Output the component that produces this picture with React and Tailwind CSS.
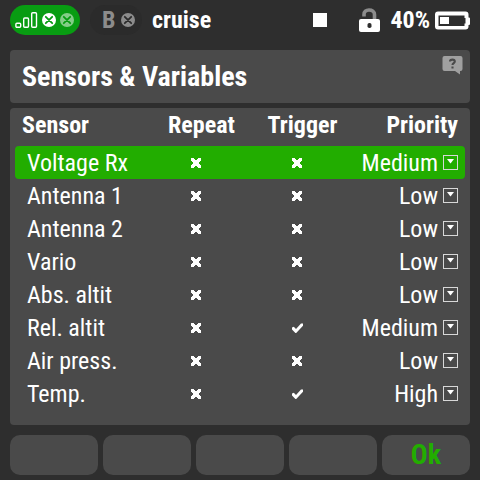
import React, { useState } from 'react';

const SENSORS = [
    { name: 'Voltage Rx', repeat: false, trigger: false, priority: 'Medium' },
    { name: 'Antenna 1', repeat: false, trigger: false, priority: 'Low' },
    { name: 'Antenna 2', repeat: false, trigger: false, priority: 'Low' },
    { name: 'Vario', repeat: false, trigger: false, priority: 'Low' },
    { name: 'Abs. altit', repeat: false, trigger: false, priority: 'Low' },
    { name: 'Rel. altit', repeat: false, trigger: true, priority: 'Medium' },
    { name: 'Air press.', repeat: false, trigger: false, priority: 'Low' },
    { name: 'Temp.', repeat: false, trigger: true, priority: 'High' },
];

const PRIORITIES = ['Low', 'Medium', 'High'];

const SignalIcon = () => (
    <svg width="23" height="16" viewBox="0 0 23 16" fill="none" stroke="#fff" strokeWidth="1.4">
        <rect x="0.9" y="11.3" width="4.8" height="4" rx="1" />
        <rect x="8.7" y="6" width="4.8" height="9.3" rx="1" />
        <rect x="16.7" y="0.7" width="4.8" height="14.6" rx="1" />
    </svg>
);

const CircleX = ({ fill, stroke }) => (
    <svg width="14" height="14" viewBox="0 0 14 14">
        <circle cx="7" cy="7" r="7" fill={fill} />
        <path d="M3.8 3.8l6.4 6.4M10.2 3.8l-6.4 6.4" stroke={stroke} strokeWidth="1.8" strokeLinecap="round" />
    </svg>
);

const UnlockIcon = () => (
    <svg width="21" height="24" viewBox="0 0 21 24">
        <path d="M5 8.5V6.5C5 3.5 7 2 10 2s5.5 1.5 5.5 4.5V12" fill="none" stroke="#8c8c8c" strokeWidth="3.6" />
        <rect y="11" width="21" height="13" rx="2" fill="#fff" />
        <rect x="8.5" y="15" width="4" height="5" rx="1.8" fill="#2e2e2e" />
    </svg>
);

const BatteryIcon = () => (
    <svg width="35" height="19" viewBox="0 0 35 19" fill="#fff">
        <path
            fillRule="evenodd"
            d="M3 0.5h27.5a3 3 0 0 1 3 3V6.5H34a1 1 0 0 1 1 1V13a1 1 0 0 1-1 1h-.5v1.5a3 3 0 0 1-3 3H3a3 3 0 0 1-3-3v-12a3 3 0 0 1 3-3zM3.5 4.5v10.5h26v-2.5h1V7h-1V4.5z"
        />
        <rect x="5" y="6" width="9" height="7" />
    </svg>
);

const HelpIcon = () => (
    <svg width="21" height="19" viewBox="0 0 21 19">
        <path d="M2.5 0h16a2 2 0 0 1 2 2v11a2 2 0 0 1-2 2H18v3.5L13 15H2.5a2 2 0 0 1-2-2V2a2 2 0 0 1 2-2z" fill="#a0a0a0" />
        <path d="M8 5.4C8 4 9 3.6 10.4 3.6s2.4.7 2.4 1.9c0 1.6-2.3 1.6-2.3 3.5M10.5 10.4v2.1" fill="none" stroke="#4a4a4a" strokeWidth="2.1" />
    </svg>
);

// both marks sit one pixel below the top of an 11px box
const CrossMark = ({ className }) => (
    <svg className={className} width="11" height="11" viewBox="0 -1 11 11" shapeRendering="crispEdges">
        <path d="M0 0h3v1h1v1h2V1h1V0h3v3H9v1H8v2h1v1h1v3H7V9H6V8H4v1H3v1H0V7h1V6h1V4H1V3H0z" fill="#fff" />
    </svg>
);

const CheckMark = ({ className }) => (
    <svg className={className} width="11" height="11" viewBox="0 -1 11 11">
        <path d="M0 4.5l1.8-.7L4 6l5-5.6h2V2.8L4.2 10H3.4L0 6.6z" fill="#fff" />
    </svg>
);

const DropIcon = () => (
    <svg width="15" height="15" viewBox="0 0 15 15" className="shrink-0">
        <rect x="0.5" y="0.5" width="14" height="14" fill="none" stroke="#d8d8d8" />
        <path d="M4 4h7L7.5 8.5z" fill="#fff" />
    </svg>
);

const Toggle = ({ label, checked, onChange }) => (
    <label className="flex h-[33px] items-center justify-center">
        <input type="checkbox" aria-label={label} checked={checked} onChange={onChange} className="peer h-0 w-0 appearance-none" />
        <CrossMark className="peer-checked:hidden" />
        <CheckMark className="hidden peer-checked:block" />
    </label>
);

const App = () => {
    const [sensors, setSensors] = useState(SENSORS);
    const [selected, setSelected] = useState(0);

    const update = (index, patch) => {
        setSensors(sensors.map((s, i) => (i === index ? { ...s, ...patch } : s)));
    };

    return (
        <div className="flex min-h-screen flex-col bg-[#2e2e2e] px-[10px] pb-[5px] font-['Roboto_Condensed',Roboto,sans-serif] text-white">
            {/* Status bar */}
            <header className="flex h-[50px] items-start pt-[5px]">
                <div className="flex h-[30px] w-[70px] items-center gap-1 rounded-full bg-[#089c12] pl-[5px]">
                    <SignalIcon />
                    <CircleX fill="#fff" stroke="#089c12" />
                    <CircleX fill="#84cd88" stroke="#089c12" />
                </div>
                <div className="ml-[10px] flex h-[30px] w-[52px] items-center gap-[6px] rounded-full bg-[#2b2b2b] pl-3 text-2xl font-bold text-[#8c8c8c]">
                    B
                    <CircleX fill="#8c8c8c" stroke="#2b2b2b" />
                </div>
                <span className="ml-[10px] text-2xl leading-[30px] font-bold">cruise</span>
                <div className="ml-auto flex h-[30px] items-center">
                    <span className="h-[14px] w-[14px] bg-white" />
                    <span className="ml-8"><UnlockIcon /></span>
                    <span className="ml-[10px] text-2xl leading-[30px] font-bold">40%</span>
                    <span className="ml-[5px]"><BatteryIcon /></span>
                </div>
            </header>

            {/* Title */}
            <div className="flex h-[53px] items-center justify-between rounded bg-[#4a4a4a] pr-[7px] pl-3">
                <h1 className="text-[28px] leading-[33px] font-bold">Sensors &amp; Variables</h1>
                <button aria-label="Help" className="mt-[6px] self-start">
                    <HelpIcon />
                </button>
            </div>

            {/* Sensor list */}
            <main className="mt-[5px] flex-1 rounded bg-[#4a4a4a] px-[5px] pb-[15px]">
                <table className="w-full table-fixed text-2xl leading-[31px]">
                    <thead>
                        <tr className="h-[38px] align-top">
                            <th className="w-[131px] pt-0.5 pl-[7px] text-left font-bold">Sensor</th>
                            <th className="w-[101px] pt-0.5 pl-[10px] font-bold">Repeat</th>
                            <th className="w-[101px] pt-0.5 pl-[10px] font-bold">Trigger</th>
                            <th className="pt-0.5 pr-[7px] text-right font-bold">Priority</th>
                        </tr>
                    </thead>
                    <tbody>
                        {sensors.map((sensor, i) => (
                            <tr key={sensor.name} onClick={() => setSelected(i)} className={i === selected ? 'bg-[#22ad00]' : ''}>
                                <td className="rounded-l pt-0.5 pl-3 whitespace-nowrap">{sensor.name}</td>
                                <td>
                                    <Toggle
                                        label={`${sensor.name} repeat`}
                                        checked={sensor.repeat}
                                        onChange={(e) => update(i, { repeat: e.target.checked })}
                                    />
                                </td>
                                <td>
                                    <Toggle
                                        label={`${sensor.name} trigger`}
                                        checked={sensor.trigger}
                                        onChange={(e) => update(i, { trigger: e.target.checked })}
                                    />
                                </td>
                                <td className="rounded-r pr-[7px]">
                                    <label className="flex h-[33px] items-center justify-end gap-[5px]">
                                        <select
                                            aria-label={`${sensor.name} priority`}
                                            value={sensor.priority}
                                            onChange={(e) => update(i, { priority: e.target.value })}
                                            className="appearance-none bg-transparent pt-0.5 leading-[31px] [field-sizing:content]"
                                        >
                                            {PRIORITIES.map((p) => (
                                                <option key={p} value={p}>{p}</option>
                                            ))}
                                        </select>
                                        <DropIcon />
                                    </label>
                                </td>
                            </tr>
                        ))}
                    </tbody>
                </table>
            </main>

            {/* Soft keys */}
            <footer className="mt-[10px] grid grid-cols-5 gap-[5px] text-[28px] leading-10 font-bold text-[#22ad00]">
                {['', '', '', '', 'Ok'].map((label, i) => (
                    <button key={i} aria-label={label || `F${i + 1}`} className="h-10 rounded-[10px] bg-[#4a4a4a]">
                        {label}
                    </button>
                ))}
            </footer>
        </div>
    );
};

export default App;
